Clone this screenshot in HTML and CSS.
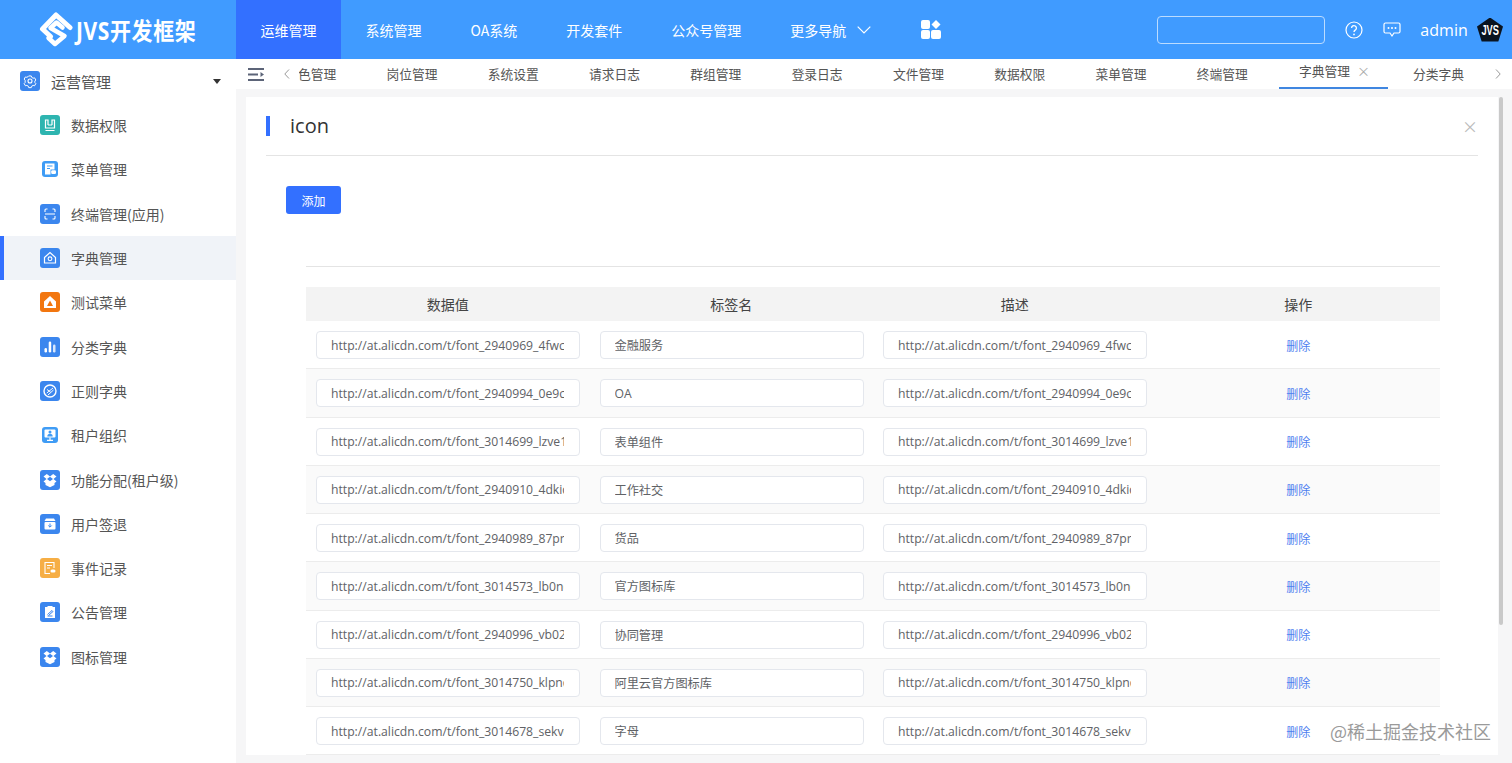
FILE: index.html
```html
<!DOCTYPE html>
<html lang="zh-CN">
<head>
<meta charset="utf-8">
<title>JVS开发框架</title>
<link rel="stylesheet" href="styles.css">
</head>
<body>
<header class="topbar">
  <div class="brand">
    <svg class="brand-mark" viewBox="0 0 34 35" width="34" height="35"><path d="M31 15.500 17 3 3.500 17l8 7.500" fill="none" stroke="#fff" stroke-width="5" stroke-linecap="round" stroke-linejoin="round"/><path d="M23.500 15.500 17.500 10.500 11.500 16l14 8-9.500 8-6.500-6" fill="none" stroke="#fff" stroke-width="4.500" stroke-linecap="round" stroke-linejoin="round"/></svg>
    <span class="brand-name">JVS开发框架</span>
  </div>
  <nav class="mainnav">
    <a class="mainnav-item is-active">运维管理</a>
    <a class="mainnav-item">系统管理</a>
    <a class="mainnav-item">OA系统</a>
    <a class="mainnav-item">开发套件</a>
    <a class="mainnav-item">公众号管理</a>
    <a class="mainnav-item mainnav-more">更多导航
      <svg viewBox="0 0 14 8" width="14" height="8"><path d="M.7.7 7 7 13.300.7" fill="none" stroke="#fff" stroke-width="1.200"/></svg>
    </a>
    <svg class="apps-icon" viewBox="0 0 20 19" width="20" height="19"><rect x="0" y="0" width="9" height="9" rx="2" fill="#fff"/><rect x="0" y="10" width="9" height="9" rx="2" fill="#fff"/><rect x="10" y="10" width="10" height="9" rx="2" fill="#fff"/><path d="M15 0l4.500 4.500L15 9l-4.500-4.500z" fill="#fff"/></svg>
  </nav>
  <div class="top-tools">
    <input class="top-search" type="text" aria-label="search">
    <svg class="tool-help" viewBox="0 0 18 18" width="18" height="18"><circle cx="9" cy="9" r="8" fill="none" stroke="#fff" stroke-width="1.200"/><path d="M6.600 7a2.400 2.400 0 1 1 3.600 2.100c-.8.500-1.200 1-1.200 2" fill="none" stroke="#fff" stroke-width="1.300"/><circle cx="9" cy="13.400" r=".9" fill="#fff"/></svg>
    <svg class="tool-chat" viewBox="0 0 18 16" width="18" height="16"><path d="M2.500 1h13A1.500 1.500 0 0 1 17 2.500v7a1.500 1.500 0 0 1-1.500 1.500H11l-2 3-2-3H2.500A1.500 1.500 0 0 1 1 9.500v-7A1.500 1.500 0 0 1 2.500 1z" fill="none" stroke="#fff" stroke-width="1.200"/><circle cx="5.500" cy="6" r="1" fill="#fff"/><circle cx="9" cy="6" r="1" fill="#fff"/><circle cx="12.500" cy="6" r="1" fill="#fff"/></svg>
    <span class="username">admin</span>
    <span class="avatar"><span class="avatar-text">JVS</span></span>
  </div>
</header>

<div class="shell">
  <aside class="sidebar">
    <div class="side-group">
      <span class="ico ico-blue"><svg viewBox="0 0 20 20"><path d="M8.600 4.500h2.800l.5 1.600 1.600.9 1.600-.4 1.400 2.400-1.100 1.200v1.600l1.100 1.200-1.400 2.400-1.600-.4-1.600.9-.5 1.600H8.600l-.5-1.600-1.600-.9-1.600.4-1.400-2.400 1.100-1.200V9.200L3.500 8l1.400-2.400 1.600.4 1.600-.9z" transform="translate(1 .9) scale(.9)" fill="none" stroke="#fff" stroke-width="1.100"/><circle cx="10" cy="10" r="2" fill="none" stroke="#fff" stroke-width="1.100"/></svg></span>
      <span class="side-group-label">运营管理</span>
      <span class="caret"></span>
    </div>
    <a class="side-item"><span class="ico ico-teal"><svg viewBox="0 0 20 20"><path d="M8 5H5.500v8h9V5H12M8 4.500V10M12 4.500V10M8 10h4M5.500 15.500h9" fill="none" stroke="#fff" stroke-width="1.200"/></svg></span>数据权限</a>
    <a class="side-item"><span class="ico ico-sky"><svg viewBox="0 0 16 16"><path d="M3 2.500h9.500v6H8.500v5H3z" fill="#fff"/><rect x="9.200" y="9.200" width="4.800" height="3.800" rx="1.200" fill="#fff"/><path d="M5 5h5.500M5 7.500h3" stroke="#3f9cf5" stroke-width="1"/></svg></span>菜单管理</a>
    <a class="side-item"><span class="ico ico-blue"><svg viewBox="0 0 20 20"><path d="M7.500 5H6a1 1 0 0 0-1 1v2M12.500 5H14a1 1 0 0 1 1 1v2M7.500 15H6a1 1 0 0 1-1-1v-2M12.500 15H14a1 1 0 0 0 1-1v-2M5 10h10" fill="none" stroke="#fff" stroke-width="1.100"/></svg></span>终端管理(应用)</a>
    <a class="side-item is-current"><span class="ico ico-blue"><svg viewBox="0 0 20 20"><path d="M4.500 9.500 10 4.500l5.500 5V15h-11z" fill="none" stroke="#fff" stroke-width="1.200"/><circle cx="10" cy="10.800" r="1.900" fill="none" stroke="#fff" stroke-width="1.100"/></svg></span>字典管理</a>
    <a class="side-item"><span class="ico ico-orange"><svg viewBox="0 0 20 20"><path d="M10 4 16 9.500V16H4V9.500z" fill="#fff"/><path d="M10 8.500 13 14H7z" fill="#f2760f"/></svg></span>测试菜单</a>
    <a class="side-item"><span class="ico ico-blue"><svg viewBox="0 0 20 20"><rect x="4.500" y="11" width="2.500" height="4.500" rx="1.200" fill="#fff"/><rect x="8.700" y="4.500" width="2.500" height="11" rx="1.200" fill="#fff"/><rect x="13" y="7.500" width="2.500" height="8" rx="1.200" fill="#fff" fill-opacity=".8"/></svg></span>分类字典</a>
    <a class="side-item"><span class="ico ico-blue"><svg viewBox="0 0 20 20"><circle cx="10" cy="10" r="6" fill="none" stroke="#fff" stroke-width="1.400"/><path d="M6.800 12 13 7M8 14l5.500-5M7 8.500l3.500 2.500" stroke="#fff" stroke-width="1" fill="none"/></svg></span>正则字典</a>
    <a class="side-item"><span class="ico ico-sky"><svg viewBox="0 0 16 16"><rect x="2.500" y="2.500" width="11" height="8" rx="1" fill="#fff"/><circle cx="8" cy="5" r="1.500" fill="#3f9cf5"/><path d="M5.300 9.500a2.700 2.700 0 0 1 5.400 0z" fill="#3f9cf5"/><path d="M8 10.500V13M5 13.300h6" stroke="#fff" stroke-width="1.200"/></svg></span>租户组织</a>
    <a class="side-item"><span class="ico ico-blue"><svg viewBox="0 0 20 20"><path d="M3.500 6.500 6.800 4 10 6.500 13.200 4l3.300 2.500L13.500 9l3 2.500-2 1.400V15L10 17.200 5.500 15v-2.100l-2-1.400 3-2.500z" fill="#fff"/><path d="M10 6.800 13 9l-3 2.300L7 9z" fill="#3b86ee"/></svg></span>功能分配(租户级)</a>
    <a class="side-item"><span class="ico ico-blue"><svg viewBox="0 0 20 20"><path d="M6 4.500h8L15.500 7h-11z" fill="#fff"/><rect x="4.500" y="8" width="11" height="7.500" rx="1" fill="#fff"/><path d="M10 9.500v3.500M8.300 11.500 10 13.200l1.700-1.700" stroke="#3b86ee" fill="none"/></svg></span>用户签退</a>
    <a class="side-item"><span class="ico ico-amber"><svg viewBox="0 0 20 20"><path d="M14 10V4.500H5v11h5M7 7.500h5M7 10h3" fill="none" stroke="#fff" stroke-width="1.100"/><rect x="10.500" y="11.500" width="5" height="3" rx="1.500" fill="#fff"/></svg></span>事件记录</a>
    <a class="side-item"><span class="ico ico-blue"><svg viewBox="0 0 20 20"><path d="M5 5h2.500V4h5v1H15v11H5z" fill="#fff"/><path d="M7.500 14h5M7.500 12.500 12 8.500l1 1-4.500 4" stroke="#3b86ee" stroke-width="1" fill="none"/></svg></span>公告管理</a>
    <a class="side-item"><span class="ico ico-blue"><svg viewBox="0 0 20 20"><path d="M3.500 6.500 6.800 4 10 6.500 13.200 4l3.300 2.500L13.500 9l3 2.500-2 1.400V15L10 17.200 5.500 15v-2.100l-2-1.400 3-2.500z" fill="#fff"/><path d="M10 6.800 13 9l-3 2.300L7 9z" fill="#3b86ee"/></svg></span>图标管理</a>
  </aside>

  <main class="workspace">
    <div class="tabbar">
      <svg class="tab-toggle" viewBox="0 0 16 13" width="16" height="13"><path d="M0 1h16M0 6.500h10M0 12h16" stroke="#5c6478" stroke-width="2"/><path d="M16 6.500 12.500 4v5z" fill="#5c6478"/></svg>
      <svg class="tab-arrow" viewBox="0 0 6 10" width="6" height="10"><path d="M5 .5.800 5 5 9.500" fill="none" stroke="#999"/></svg>
      <div class="tab-window">
        <div class="tab-strip">
          <a class="tab">角色管理</a>
          <a class="tab">岗位管理</a>
          <a class="tab">系统设置</a>
          <a class="tab">请求日志</a>
          <a class="tab">群组管理</a>
          <a class="tab">登录日志</a>
          <a class="tab">文件管理</a>
          <a class="tab">数据权限</a>
          <a class="tab">菜单管理</a>
          <a class="tab">终端管理</a>
          <a class="tab is-open">字典管理<span class="tab-close">×</span></a>
          <a class="tab">分类字典</a>
        </div>
      </div>
      <svg class="tab-arrow tab-arrow-next" viewBox="0 0 6 10" width="6" height="10"><path d="M1 .5 5.200 5 1 9.500" fill="none" stroke="#999"/></svg>
    </div>

    <div class="stage">
      <section class="card">
        <div class="card-head">
          <h1 class="card-title">icon</h1>
          <span class="card-close">×</span>
        </div>
        <button class="btn-add" type="button">添加</button>
        <div class="table-wrap">
          <div class="grid-row grid-head"><span>数据值</span><span>标签名</span><span>描述</span><span>操作</span></div>
          <div class="grid-row"><input class="field" value="http://at.alicdn.com/t/font_2940969_4fwcq3n.css"><input class="field" value="金融服务"><input class="field" value="http://at.alicdn.com/t/font_2940969_4fwcq3n.css"><a class="row-del">删除</a></div>
          <div class="grid-row"><input class="field" value="http://at.alicdn.com/t/font_2940994_0e9cq3n.css"><input class="field" value="OA"><input class="field" value="http://at.alicdn.com/t/font_2940994_0e9cq3n.css"><a class="row-del">删除</a></div>
          <div class="grid-row"><input class="field" value="http://at.alicdn.com/t/font_3014699_lzve1q3n.css"><input class="field" value="表单组件"><input class="field" value="http://at.alicdn.com/t/font_3014699_lzve1q3n.css"><a class="row-del">删除</a></div>
          <div class="grid-row"><input class="field" value="http://at.alicdn.com/t/font_2940910_4dkiq3n.css"><input class="field" value="工作社交"><input class="field" value="http://at.alicdn.com/t/font_2940910_4dkiq3n.css"><a class="row-del">删除</a></div>
          <div class="grid-row"><input class="field" value="http://at.alicdn.com/t/font_2940989_87prq3n.css"><input class="field" value="货品"><input class="field" value="http://at.alicdn.com/t/font_2940989_87prq3n.css"><a class="row-del">删除</a></div>
          <div class="grid-row"><input class="field" value="http://at.alicdn.com/t/font_3014573_lb0nq3n.css"><input class="field" value="官方图标库"><input class="field" value="http://at.alicdn.com/t/font_3014573_lb0nq3n.css"><a class="row-del">删除</a></div>
          <div class="grid-row"><input class="field" value="http://at.alicdn.com/t/font_2940996_vb02q3n.css"><input class="field" value="协同管理"><input class="field" value="http://at.alicdn.com/t/font_2940996_vb02q3n.css"><a class="row-del">删除</a></div>
          <div class="grid-row"><input class="field" value="http://at.alicdn.com/t/font_3014750_klpnq3n.css"><input class="field" value="阿里云官方图标库"><input class="field" value="http://at.alicdn.com/t/font_3014750_klpnq3n.css"><a class="row-del">删除</a></div>
          <div class="grid-row"><input class="field" value="http://at.alicdn.com/t/font_3014678_sekvq3n.css"><input class="field" value="字母"><input class="field" value="http://at.alicdn.com/t/font_3014678_sekvq3n.css"><a class="row-del">删除</a></div>
        </div>
      </section>
      <div class="scroll-thumb"></div>
    </div>
  </main>
</div>
<div class="watermark">@稀土掘金技术社区</div>
</body>
</html>
```
FILE: styles.css
```css
* { box-sizing: border-box; }
html, body { margin: 0; height: 100%; overflow: hidden; }
body {
  font-family: "Noto Sans CJK SC", "Open Sans", sans-serif;
  font-size: 14px;
  color: #555;
  background: #fff;
}
a { color: inherit; text-decoration: none; }

.topbar {
  height: 59px;
  background: #409bff;
  display: flex;
  color: #fff;
}
.brand {
  width: 236px;
  display: flex;
  align-items: center;
  padding-left: 39px;
}
.brand-mark { flex: none; }
.brand-name {
  margin-left: 3px;
  font-family: "Open Sans", "Noto Sans CJK SC", sans-serif;
  font-size: 21px;
  font-weight: 700;
  letter-spacing: .6px;
  white-space: nowrap;
  transform: scaleY(1.15);
}
.mainnav { display: flex; align-items: stretch; }
.mainnav-item {
  display: flex;
  align-items: center;
  gap: 11px;
  padding: 0 24.500px;
  font-size: 14px;
  white-space: nowrap;
}
.mainnav-item.is-active { background: #3370ff; }
.apps-icon { align-self: center; margin-left: 25.500px; }
.top-tools {
  margin-left: auto;
  display: flex;
  align-items: center;
  padding-right: 9px;
}
.top-search {
  width: 168px;
  height: 28px;
  background: #409bff;
  border: 1px solid #bcdcff;
  border-radius: 4px;
  outline: none;
}
.tool-help { margin-left: 20px; }
.tool-chat { margin-left: 20px; }
.username {
  margin-left: 19px;
  font-family: "Open Sans", sans-serif;
  font-size: 16px;
  letter-spacing: .1px;
}
.avatar {
  width: 26px;
  height: 24px;
  margin-left: 9px;
  background: #0a1420;
  clip-path: polygon(50% 0, 100% 38%, 82% 100%, 18% 100%, 0 38%);
  display: flex;
  align-items: center;
  justify-content: center;
  color: #fff;
  white-space: nowrap;
}
.avatar-text {
  display: inline-block;
  font-family: "Liberation Sans", sans-serif;
  font-size: 15px;
  font-weight: 700;
  transform: scaleX(.62);
}

.shell { display: flex; height: 704px; }
.sidebar { width: 236px; flex: none; }
.side-group {
  height: 44px;
  display: flex;
  align-items: center;
  padding-left: 20px;
}
.side-group-label { margin-left: 11px; font-size: 15px; }
.caret {
  margin-left: auto;
  margin-right: 15px;
  border: 4.500px solid transparent;
  border-top: 5px solid #333;
  border-bottom: 0;
}
.side-item {
  height: 44.300px;
  display: flex;
  align-items: center;
  gap: 11px;
  padding-left: 40px;
  white-space: nowrap;
}
.side-item.is-current {
  background: #f0f3f8;
  border-left: 4px solid #3370ff;
  padding-left: 36px;
}
.ico {
  width: 20px;
  height: 20px;
  flex: none;
  border-radius: 3px;
  display: flex;
  align-items: center;
  justify-content: center;
}
.ico svg { width: 100%; height: 100%; display: block; }
.ico-blue { background: #3b86ee; }
.ico-teal { background: #2eb5b0; }
.ico-orange { background: #f2760f; }
.ico-amber { background: #f6ae45; }
.ico-sky {
  width: 16px;
  height: 16px;
  margin: 0 2px;
  background: #3f9cf5;
}

.workspace { flex: 1; min-width: 0; display: flex; flex-direction: column; background: #f6f6f7; }
.tabbar {
  height: 30px;
  flex: none;
  background: #fff;
  display: flex;
  align-items: center;
  font-size: 12.750px;
}
.tab-toggle { margin-left: 12px; flex: none; }
.tab-arrow { margin-left: 20px; flex: none; }
.tab-arrow-next { margin-left: 4px; }
.tab-window {
  width: 1192px;
  height: 30px;
  margin-left: 9px;
  overflow: hidden;
}
.tab-strip {
  display: flex;
  margin-left: -39px;
  height: 30px;
}
.tab {
  flex: none;
  width: 101.300px;
  height: 30px;
  display: flex;
  align-items: center;
  justify-content: center;
  padding-bottom: 1px;
  white-space: nowrap;
}
.tab.is-open {
  width: 109px;
  margin-left: 6px;
  padding-bottom: 5px;
  border-bottom: 2px solid #3f86e0;
  justify-content: flex-start;
  padding-left: 20px;
}
.tab-close { margin-left: 7px; font-size: 13px; color: #aaa; line-height: 1; }

.stage {
  flex: 1;
  min-height: 0;
  display: flex;
  padding: 8px 0 8px 10px;
}
.card {
  width: 1252px;
  background: #fff;
  overflow: hidden;
  padding: 0 20px;
}
.card-head {
  height: 59px;
  display: flex;
  align-items: center;
  justify-content: space-between;
  border-bottom: 1px solid #e4e4e4;
}
.card-title {
  margin: 0;
  height: 20px;
  border-left: 4px solid #3370ff;
  padding-left: 20px;
  font-family: "Open Sans", sans-serif;
  font-size: 20px;
  font-weight: 400;
  line-height: 20px;
  color: #333;
}
.card-close { color: #bbb; font-size: 16px; margin-right: 0; line-height: 1; }
.btn-add {
  display: block;
  width: 55px;
  height: 28px;
  margin: 30px 0 0 20px;
  border: 0;
  border-radius: 3px;
  background: #3370ff;
  color: #fff;
  font-family: inherit;
  font-size: 12px;
  padding: 0;
}
.table-wrap {
  margin: 52px 38px 0 40px;
  padding-top: 20px;
  border-top: 1px solid #e4e4e4;
}
.grid-row {
  display: grid;
  grid-template-columns: repeat(4, 283.500px);
  align-items: center;
  height: 48.250px;
  padding-top: 1px;
  border-bottom: 1px solid #ececec;
}
.grid-row:nth-child(odd) { background: #fafafa; }
.grid-head, .grid-row.grid-head {
  height: 34px;
  padding-top: 0;
  background: #f3f3f3;
  border-bottom: 0;
  font-size: 14px;
  color: #444;
  text-align: center;
}
.field {
  width: 264px;
  height: 28px;
  margin-left: 10px;
  padding: 0 15px 0 14px;
  border: 1px solid #e4e7ed;
  border-radius: 4px;
  background: #fff;
  color: #606266;
  font-family: "Open Sans", "Noto Sans CJK SC", sans-serif;
  font-size: 12.200px;
  outline: none;
}
.row-del { text-align: center; color: #4f7ff0; font-size: 12px; }
.scroll-thumb {
  width: 4px;
  height: 528px;
  margin-left: 1px;
  background: #c9c9c9;
  border-radius: 2px;
}
.watermark {
  position: absolute;
  left: 1330px;
  top: 719px;
  font-size: 18px;
  line-height: 24px;
  color: #9a9a9a;
  white-space: nowrap;
}
```
